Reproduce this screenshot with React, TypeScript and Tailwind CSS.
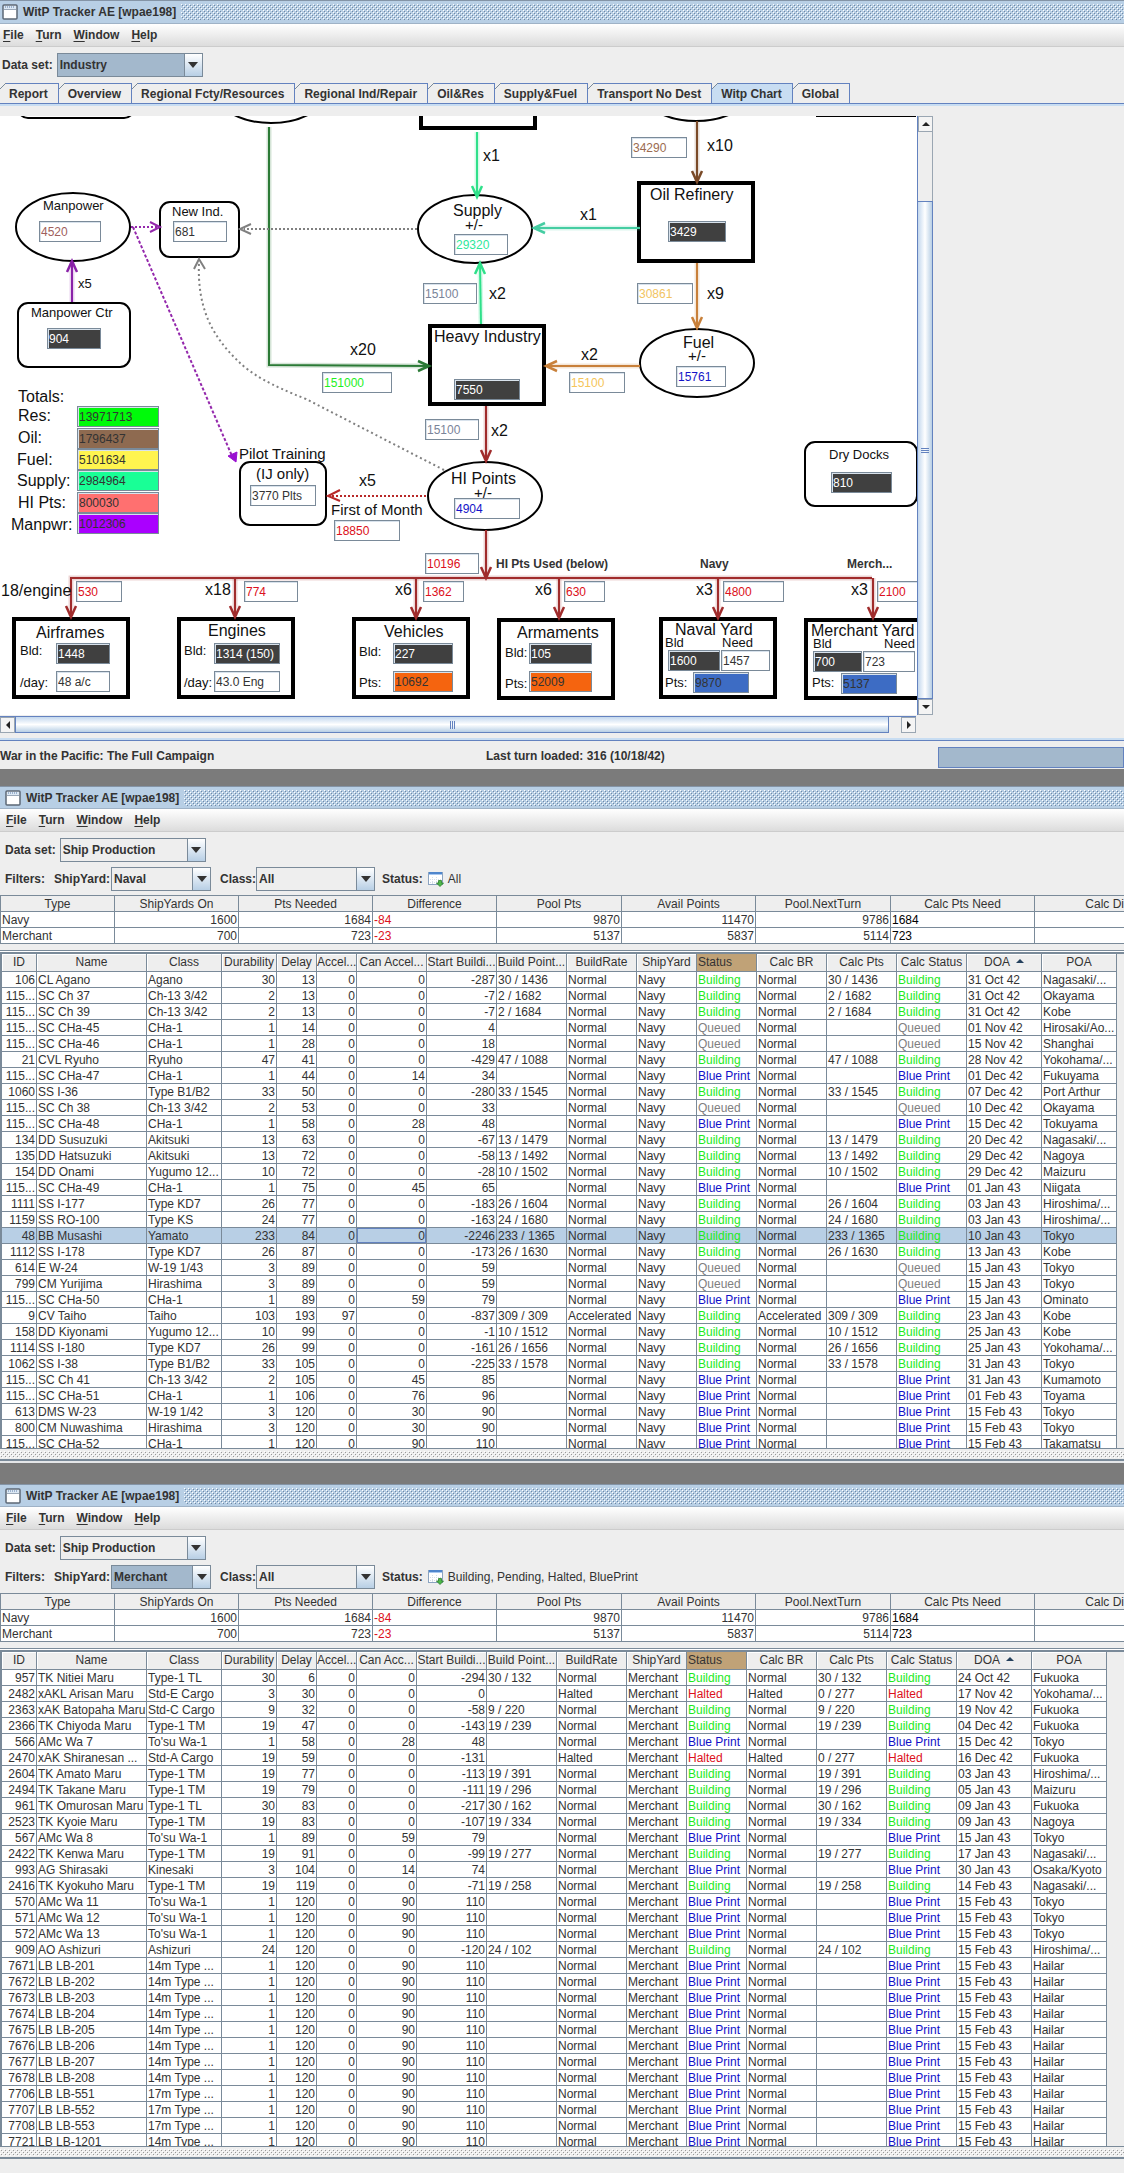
import { useId, useState, type ReactNode } from 'react'

type Status = 'Building' | 'Queued' | 'Blue Print' | 'Halted'

// id, name, class, durability, delay, accel, can accel, start, build pts, rate, status, calc pts, doa, poa
type Ship = [string, string, string, number, number, number, number, number, string, string, Status, string, string, string]

const STATUS_COLOR: Record<Status, string> = {
  Building: 'text-[#1cea1c]',
  Queued: 'text-[#808080]',
  'Blue Print': 'text-[#1010c8]',
  Halted: 'text-[#dc1020]',
}

const NAVAL: Ship[] = [
  ['106', 'CL Agano', 'Agano', 30, 13, 0, 0, -287, '30 / 1436', 'Normal', 'Building', '30 / 1436', '31 Oct 42', 'Nagasaki/...'],
  ['115...', 'SC Ch 37', 'Ch-13 3/42', 2, 13, 0, 0, -7, '2 / 1682', 'Normal', 'Building', '2 / 1682', '31 Oct 42', 'Okayama'],
  ['115...', 'SC Ch 39', 'Ch-13 3/42', 2, 13, 0, 0, -7, '2 / 1684', 'Normal', 'Building', '2 / 1684', '31 Oct 42', 'Kobe'],
  ['115...', 'SC CHa-45', 'CHa-1', 1, 14, 0, 0, 4, '', 'Normal', 'Queued', '', '01 Nov 42', 'Hirosaki/Ao...'],
  ['115...', 'SC CHa-46', 'CHa-1', 1, 28, 0, 0, 18, '', 'Normal', 'Queued', '', '15 Nov 42', 'Shanghai'],
  ['21', 'CVL Ryuho', 'Ryuho', 47, 41, 0, 0, -429, '47 / 1088', 'Normal', 'Building', '47 / 1088', '28 Nov 42', 'Yokohama/...'],
  ['115...', 'SC CHa-47', 'CHa-1', 1, 44, 0, 14, 34, '', 'Normal', 'Blue Print', '', '01 Dec 42', 'Fukuyama'],
  ['1060', 'SS I-36', 'Type B1/B2', 33, 50, 0, 0, -280, '33 / 1545', 'Normal', 'Building', '33 / 1545', '07 Dec 42', 'Port Arthur'],
  ['115...', 'SC Ch 38', 'Ch-13 3/42', 2, 53, 0, 0, 33, '', 'Normal', 'Queued', '', '10 Dec 42', 'Okayama'],
  ['115...', 'SC CHa-48', 'CHa-1', 1, 58, 0, 28, 48, '', 'Normal', 'Blue Print', '', '15 Dec 42', 'Tokuyama'],
  ['134', 'DD Susuzuki', 'Akitsuki', 13, 63, 0, 0, -67, '13 / 1479', 'Normal', 'Building', '13 / 1479', '20 Dec 42', 'Nagasaki/...'],
  ['135', 'DD Hatsuzuki', 'Akitsuki', 13, 72, 0, 0, -58, '13 / 1492', 'Normal', 'Building', '13 / 1492', '29 Dec 42', 'Nagoya'],
  ['154', 'DD Onami', 'Yugumo 12...', 10, 72, 0, 0, -28, '10 / 1502', 'Normal', 'Building', '10 / 1502', '29 Dec 42', 'Maizuru'],
  ['115...', 'SC CHa-49', 'CHa-1', 1, 75, 0, 45, 65, '', 'Normal', 'Blue Print', '', '01 Jan 43', 'Niigata'],
  ['1111', 'SS I-177', 'Type KD7', 26, 77, 0, 0, -183, '26 / 1604', 'Normal', 'Building', '26 / 1604', '03 Jan 43', 'Hiroshima/...'],
  ['1159', 'SS RO-100', 'Type KS', 24, 77, 0, 0, -163, '24 / 1680', 'Normal', 'Building', '24 / 1680', '03 Jan 43', 'Hiroshima/...'],
  ['48', 'BB Musashi', 'Yamato', 233, 84, 0, 0, -2246, '233 / 1365', 'Normal', 'Building', '233 / 1365', '10 Jan 43', 'Tokyo'],
  ['1112', 'SS I-178', 'Type KD7', 26, 87, 0, 0, -173, '26 / 1630', 'Normal', 'Building', '26 / 1630', '13 Jan 43', 'Kobe'],
  ['614', 'E W-24', 'W-19 1/43', 3, 89, 0, 0, 59, '', 'Normal', 'Queued', '', '15 Jan 43', 'Tokyo'],
  ['799', 'CM Yurijima', 'Hirashima', 3, 89, 0, 0, 59, '', 'Normal', 'Queued', '', '15 Jan 43', 'Tokyo'],
  ['115...', 'SC CHa-50', 'CHa-1', 1, 89, 0, 59, 79, '', 'Normal', 'Blue Print', '', '15 Jan 43', 'Ominato'],
  ['9', 'CV Taiho', 'Taiho', 103, 193, 97, 0, -837, '309 / 309', 'Accelerated', 'Building', '309 / 309', '23 Jan 43', 'Kobe'],
  ['158', 'DD Kiyonami', 'Yugumo 12...', 10, 99, 0, 0, -1, '10 / 1512', 'Normal', 'Building', '10 / 1512', '25 Jan 43', 'Kobe'],
  ['1114', 'SS I-180', 'Type KD7', 26, 99, 0, 0, -161, '26 / 1656', 'Normal', 'Building', '26 / 1656', '25 Jan 43', 'Yokohama/...'],
  ['1062', 'SS I-38', 'Type B1/B2', 33, 105, 0, 0, -225, '33 / 1578', 'Normal', 'Building', '33 / 1578', '31 Jan 43', 'Tokyo'],
  ['115...', 'SC Ch 41', 'Ch-13 3/42', 2, 105, 0, 45, 85, '', 'Normal', 'Blue Print', '', '31 Jan 43', 'Kumamoto'],
  ['115...', 'SC CHa-51', 'CHa-1', 1, 106, 0, 76, 96, '', 'Normal', 'Blue Print', '', '01 Feb 43', 'Toyama'],
  ['613', 'DMS W-23', 'W-19 1/42', 3, 120, 0, 30, 90, '', 'Normal', 'Blue Print', '', '15 Feb 43', 'Tokyo'],
  ['800', 'CM Nuwashima', 'Hirashima', 3, 120, 0, 30, 90, '', 'Normal', 'Blue Print', '', '15 Feb 43', 'Tokyo'],
  ['115...', 'SC CHa-52', 'CHa-1', 1, 120, 0, 90, 110, '', 'Normal', 'Blue Print', '', '15 Feb 43', 'Takamatsu'],
]

const barge = (id: string, num: string, cls = '14m Type ...'): Ship => [
  id, `LB LB-${num}`, cls, 1, 120, 0, 90, 110, '', 'Normal', 'Blue Print', '', '15 Feb 43', 'Hailar',
]

const MERCHANT: Ship[] = [
  ['957', 'TK Nitiei Maru', 'Type-1 TL', 30, 6, 0, 0, -294, '30 / 132', 'Normal', 'Building', '30 / 132', '24 Oct 42', 'Fukuoka'],
  ['2482', 'xAKL Arisan Maru', 'Std-E Cargo', 3, 30, 0, 0, 0, '', 'Halted', 'Halted', '0 / 277', '17 Nov 42', 'Yokohama/...'],
  ['2363', 'xAK Batopaha Maru', 'Std-C Cargo', 9, 32, 0, 0, -58, '9 / 220', 'Normal', 'Building', '9 / 220', '19 Nov 42', 'Fukuoka'],
  ['2366', 'TK Chiyoda Maru', 'Type-1 TM', 19, 47, 0, 0, -143, '19 / 239', 'Normal', 'Building', '19 / 239', '04 Dec 42', 'Fukuoka'],
  ['566', 'AMc Wa 7', "To'su Wa-1", 1, 58, 0, 28, 48, '', 'Normal', 'Blue Print', '', '15 Dec 42', 'Tokyo'],
  ['2470', 'xAK Shiranesan ...', 'Std-A Cargo', 19, 59, 0, 0, -131, '', 'Halted', 'Halted', '0 / 277', '16 Dec 42', 'Fukuoka'],
  ['2604', 'TK Amato Maru', 'Type-1 TM', 19, 77, 0, 0, -113, '19 / 391', 'Normal', 'Building', '19 / 391', '03 Jan 43', 'Hiroshima/...'],
  ['2494', 'TK Takane Maru', 'Type-1 TM', 19, 79, 0, 0, -111, '19 / 296', 'Normal', 'Building', '19 / 296', '05 Jan 43', 'Maizuru'],
  ['961', 'TK Omurosan Maru', 'Type-1 TL', 30, 83, 0, 0, -217, '30 / 162', 'Normal', 'Building', '30 / 162', '09 Jan 43', 'Fukuoka'],
  ['2523', 'TK Kyoie Maru', 'Type-1 TM', 19, 83, 0, 0, -107, '19 / 334', 'Normal', 'Building', '19 / 334', '09 Jan 43', 'Nagoya'],
  ['567', 'AMc Wa 8', "To'su Wa-1", 1, 89, 0, 59, 79, '', 'Normal', 'Blue Print', '', '15 Jan 43', 'Tokyo'],
  ['2422', 'TK Kenwa Maru', 'Type-1 TM', 19, 91, 0, 0, -99, '19 / 277', 'Normal', 'Building', '19 / 277', '17 Jan 43', 'Nagasaki/...'],
  ['993', 'AG Shirasaki', 'Kinesaki', 3, 104, 0, 14, 74, '', 'Normal', 'Blue Print', '', '30 Jan 43', 'Osaka/Kyoto'],
  ['2416', 'TK Kyokuho Maru', 'Type-1 TM', 19, 119, 0, 0, -71, '19 / 258', 'Normal', 'Building', '19 / 258', '14 Feb 43', 'Nagasaki/...'],
  ['570', 'AMc Wa 11', "To'su Wa-1", 1, 120, 0, 90, 110, '', 'Normal', 'Blue Print', '', '15 Feb 43', 'Tokyo'],
  ['571', 'AMc Wa 12', "To'su Wa-1", 1, 120, 0, 90, 110, '', 'Normal', 'Blue Print', '', '15 Feb 43', 'Tokyo'],
  ['572', 'AMc Wa 13', "To'su Wa-1", 1, 120, 0, 90, 110, '', 'Normal', 'Blue Print', '', '15 Feb 43', 'Tokyo'],
  ['909', 'AO Ashizuri', 'Ashizuri', 24, 120, 0, 0, -120, '24 / 102', 'Normal', 'Building', '24 / 102', '15 Feb 43', 'Hiroshima/...'],
  barge('7671', '201'),
  barge('7672', '202'),
  barge('7673', '203'),
  barge('7674', '204'),
  barge('7675', '205'),
  barge('7676', '206'),
  barge('7677', '207'),
  barge('7678', '208'),
  barge('7706', '551', '17m Type ...'),
  barge('7707', '552', '17m Type ...'),
  barge('7708', '553', '17m Type ...'),
  barge('7721', '1201'),
]

/* ---------- window chrome ---------- */

function Bumps({ className, light = '#ffffff', dark = '#7088a4' }: { className: string; light?: string; dark?: string }) {
  const id = useId()
  return (
    <svg className={className} aria-hidden="true">
      <defs>
        <pattern id={id} width="4" height="4" patternUnits="userSpaceOnUse">
          <rect x="0" y="0" width="1" height="1" fill={light} />
          <rect x="1" y="1" width="1" height="1" fill={dark} />
          <rect x="2" y="2" width="1" height="1" fill={light} />
          <rect x="3" y="3" width="1" height="1" fill={dark} />
        </pattern>
      </defs>
      <rect width="100%" height="100%" fill={`url(#${id})`} />
    </svg>
  )
}

function FrameIcon() {
  return (
    <svg width="16" height="16" viewBox="0 0 16 16" aria-hidden="true">
      <rect x="1" y="1" width="14" height="14" rx="1" fill="#fff" stroke="#5c6876" strokeWidth="1.5" />
      <rect x="2" y="2" width="12" height="3" fill="#dce8f4" />
      <path d="M3 3h10" stroke="#5c7ca8" strokeDasharray="1 1" />
      <path d="M2 5.500h12" stroke="#9aa8b8" />
    </svg>
  )
}

function Frame({ inset, children }: { inset: boolean; children: ReactNode }) {
  return (
    <section className="bg-[#eeeeee]">
      <header
        className={`flex items-center gap-[5px] border-t border-b border-t-[#8494a6] border-b-[#9fb2c6] bg-[#b8cfe5] ${
          inset ? 'h-[23px] pl-[5px]' : 'h-6 pl-[2px]'
        }`}
      >
        <FrameIcon />
        <h2 className="font-bold whitespace-nowrap">WitP Tracker AE [wpae198]</h2>
        <Bumps className="h-4 min-w-0 flex-1" />
      </header>
      <nav
        className={`flex h-[23px] items-center gap-3 border-b border-[#cccccc] bg-linear-to-b from-white to-[#dcdcdc] ${
          inset ? 'pl-[6px]' : 'pl-[3px]'
        }`}
      >
        {['File', 'Turn', 'Window', 'Help'].map((m) => (
          <button key={m} type="button" className="font-bold">
            <span className="underline underline-offset-2">{m[0]}</span>
            {m.slice(1)}
          </button>
        ))}
      </nav>
      {children}
    </section>
  )
}

function Combo({ id, options, focused, width }: { id: string; options: string[]; focused?: boolean; width: string }) {
  const [value, setValue] = useState(options[0])
  return (
    <span className={`relative flex h-6 ${width}`}>
      <select
        id={id}
        value={value}
        onChange={(e) => setValue(e.target.value)}
        className={`w-full appearance-none border border-[#7a8a99] pl-[2px] font-bold outline-none ${
          focused ? 'bg-[#a3b8cc]' : 'bg-[#eeeeee]'
        }`}
      >
        {options.map((o) => (
          <option key={o}>{o}</option>
        ))}
      </select>
      <span className="pointer-events-none absolute inset-y-0 right-0 flex w-[19px] items-center justify-center border border-[#7a8a99] bg-linear-to-b from-white to-[#b8cfe5]">
        <svg width="10" height="6" viewBox="0 0 10 6" aria-hidden="true">
          <path d="M0 0h10L5 6z" fill="#333" />
        </svg>
      </span>
    </span>
  )
}

/* ---------- industry chart ---------- */

const TABS = ['Report', 'Overview', 'Regional Fcty/Resources', 'Regional Ind/Repair', 'Oil&Res', 'Supply&Fuel', 'Transport No Dest', 'Witp Chart', 'Global']

// the sheet is shown scrolled down by this much
const SCROLL_TOP = 116

// name, value, x, y, width, text and fill
const FIELDS: [string, string, number, number, number, string][] = [
  ['Oil output', '34290', 631, 137, 56, 'text-[#9b6b50]'],
  ['Manpower', '4520', 39, 221, 62, 'text-[#a0605c]'],
  ['New industry', '681', 173, 221, 54, 'text-[#333333]'],
  ['Supply change', '29320', 454, 234, 54, 'text-[#2ee89a]'],
  ['Oil refinery', '3429', 668, 221, 58, 'bg-[#404040] text-white'],
  ['Heavy industry supply', '15100', 423, 283, 54, 'text-[#7a8499]'],
  ['Refinery fuel', '30861', 637, 283, 56, 'text-[#f2c462]'],
  ['Manpower centers', '904', 47, 328, 54, 'bg-[#404040] text-white'],
  ['Resources used', '151000', 322, 372, 70, 'text-[#1ef01e]'],
  ['Heavy industry', '7550', 454, 379, 66, 'bg-[#404040] text-white'],
  ['Fuel used', '15100', 569, 372, 56, 'text-[#f5c55a]'],
  ['Fuel change', '15761', 676, 366, 50, 'text-[#1414c8]'],
  ['Heavy industry points', '15100', 425, 419, 54, 'text-[#7a8499]'],
  ['Pilots', '3770 Plts', 250, 485, 66, 'text-[#333333]'],
  ['HI points change', '4904', 454, 498, 66, 'text-[#1414c8]'],
  ['Pilot cost', '18850', 334, 520, 66, 'text-[#dc1020]'],
  ['HI points used', '10196', 425, 553, 54, 'text-[#dc1020]'],
  ['Dry docks', '810', 831, 472, 61, 'bg-[#404040] text-white'],
  ['Total resources', '13971713', 77, 406, 82, 'bg-[#00fa0a] text-[#333333]'],
  ['Total oil', '1796437', 77, 428, 82, 'bg-[#8e6a50] text-[#333333]'],
  ['Total fuel', '5101634', 77, 449, 82, 'bg-[#fff44f] text-[#333333]'],
  ['Total supply', '2984964', 77, 470, 82, 'bg-[#19ff96] text-[#333333]'],
  ['Total HI points', '800030', 77, 492, 82, 'bg-[#ff7070] text-[#333333]'],
  ['Total manpower', '1012306', 77, 513, 82, 'bg-[#aa00ff] text-[#333333]'],
  ['Airframe HI', '530', 76, 581, 46, 'text-[#dc1020]'],
  ['Engine HI', '774', 244, 581, 54, 'text-[#dc1020]'],
  ['Vehicle HI', '1362', 423, 581, 41, 'text-[#dc1020]'],
  ['Armament HI', '630', 564, 581, 41, 'text-[#dc1020]'],
  ['Naval yard HI', '4800', 723, 581, 61, 'text-[#dc1020]'],
  ['Merchant yard HI', '2100', 877, 581, 54, 'text-[#dc1020]'],
  ['Airframes built', '1448', 56, 643, 54, 'bg-[#404040] text-white'],
  ['Airframes per day', '48 a/c', 56, 671, 54, 'text-[#333333]'],
  ['Engines built', '1314 (150)', 214, 643, 66, 'bg-[#404040] text-white'],
  ['Engines per day', '43.0 Eng', 214, 671, 66, 'text-[#333333]'],
  ['Vehicles built', '227', 393, 643, 60, 'bg-[#404040] text-white'],
  ['Vehicle points', '10692', 393, 671, 60, 'bg-[#f5640f] text-[#333333]'],
  ['Armaments built', '105', 529, 643, 63, 'bg-[#404040] text-white'],
  ['Armament points', '52009', 529, 671, 63, 'bg-[#f5640f] text-[#333333]'],
  ['Naval yard built', '1600', 668, 650, 52, 'bg-[#404040] text-white'],
  ['Naval yard need', '1457', 721, 650, 49, 'text-[#333333]'],
  ['Naval yard points', '9870', 693, 672, 56, 'bg-[#3d6cc4] text-[#333333]'],
  ['Merchant yard built', '700', 813, 651, 49, 'bg-[#404040] text-white'],
  ['Merchant yard need', '723', 863, 651, 52, 'text-[#333333]'],
  ['Merchant yard points', '5137', 841, 673, 56, 'bg-[#3d6cc4] text-[#333333]'],
]

// text, x, baseline, size
const LABELS: [string, number, number, number][] = [
  ['x1', 483, 161, 16],
  ['x10', 707, 151, 16],
  ['Manpower', 43, 210, 13],
  ['New Ind.', 172, 216, 13],
  ['Supply', 453, 216, 16],
  ['+/-', 465, 230, 15],
  ['x1', 580, 220, 16],
  ['Oil Refinery', 650, 200, 16],
  ['x2', 489, 299, 16],
  ['x9', 707, 299, 16],
  ['x5', 78, 288, 13],
  ['Manpower Ctr', 31, 317, 13],
  ['Heavy Industry', 434, 342, 16],
  ['Fuel', 683, 348, 16],
  ['+/-', 688, 361, 15],
  ['x20', 350, 355, 16],
  ['x2', 581, 360, 16],
  ['x2', 491, 436, 16],
  ['Totals:', 18, 402, 16],
  ['Res:', 18, 421, 16],
  ['Oil:', 18, 443, 16],
  ['Fuel:', 17, 465, 16],
  ['Supply:', 17, 486, 16],
  ['HI Pts:', 18, 508, 16],
  ['Manpwr:', 11, 530, 16],
  ['Pilot Training', 239, 459, 15],
  ['(IJ only)', 256, 479, 15],
  ['x5', 359, 486, 16],
  ['HI Points', 451, 484, 16],
  ['+/-', 474, 498, 15],
  ['First of Month', 331, 515, 15],
  ['Dry Docks', 829, 459, 13],
  ['18/engine', 1, 596, 16],
  ['x18', 205, 595, 16],
  ['x6', 395, 595, 16],
  ['x6', 535, 595, 16],
  ['x3', 696, 595, 16],
  ['x3', 851, 595, 16],
  ['Airframes', 36, 638, 16],
  ['Bld:', 20, 655, 13],
  ['/day:', 20, 687, 13],
  ['Engines', 208, 636, 16],
  ['Bld:', 184, 655, 13],
  ['/day:', 184, 687, 13],
  ['Vehicles', 384, 637, 16],
  ['Bld:', 359, 656, 13],
  ['Pts:', 359, 687, 13],
  ['Armaments', 517, 638, 16],
  ['Bld:', 505, 657, 13],
  ['Pts:', 505, 688, 13],
  ['Naval Yard', 675, 635, 16],
  ['Bld', 665, 647, 13],
  ['Need', 722, 647, 13],
  ['Pts:', 665, 687, 13],
  ['Merchant Yard', 811, 636, 16],
  ['Bld', 813, 648, 13],
  ['Need', 884, 648, 13],
  ['Pts:', 812, 687, 13],
]

const HEADINGS: [string, number][] = [
  ['HI Pts Used (below)', 496],
  ['Navy', 700],
  ['Merch...', 847],
]

const ELLIPSES: [number, number][] = [[271, 89], [696, 87], [73, 227], [475, 229], [697, 363], [485, 496]]

const ROUNDED: [number, number, number, number][] = [
  [18, 52, 116, 66],
  [160, 202, 79, 55],
  [18, 303, 112, 64],
  [240, 462, 86, 63],
  [805, 442, 112, 64],
]

const BOXES: [number, number, number][] = [
  [421, 50, 114],
  [639, 183, 114],
  [430, 326, 114],
  [14, 619, 114],
  [179, 619, 114],
  [354, 619, 114],
  [499, 620, 114],
  [661, 619, 114],
  [806, 620, 114],
]

const RED = '#a02c2c'

// path, colour, arrow tip x, y, rotation
const WIRES: [string, string, number, number, number][] = [
  ['M477 132V196', '#2fe08a', 477, 197, 0],
  ['M481 324L480 264', '#2fe08a', 480, 263, 180],
  ['M640 228H536', '#45cda2', 534, 228, 90],
  ['M269 127V365L428 366', '#2b7a36', 429, 366, -90],
  ['M72 302V262', '#8a22a8', 72, 261, 180],
  ['M697 121V181', '#7a4a28', 697, 182, 0],
  ['M697 263V328', '#c8803a', 697, 328, 0],
  ['M640 366H548', '#c8803a', 546, 366, 90],
  ['M486 406V460', RED, 486, 461, 0],
  ['M486 530V577', RED, 486, 578, 0],
  ['M872 578H71V616', RED, 71, 617, 0],
  ['M235 578V616', RED, 235, 617, 0],
  ['M416 578V617', RED, 416, 618, 0],
  ['M559 578V617', RED, 559, 618, 0],
  ['M718 578V617', RED, 718, 618, 0],
  ['M873 578V617', RED, 873, 618, 0],
]

function ChartSheet() {
  return (
    <svg className="absolute inset-0 h-full w-full" aria-label="Industry flow" role="img">
      <g transform={`translate(0 ${-SCROLL_TOP})`} fontFamily="'Liberation Sans', Arial, sans-serif">
        <g fill="#fff" stroke="#000" strokeWidth="2">
          {ELLIPSES.map(([cx, cy]) => (
            <ellipse key={cx} cx={cx} cy={cy} rx="57" ry="34" />
          ))}
          {ROUNDED.map(([x, y, w, h]) => (
            <rect key={`${x}-${y}`} x={x} y={y} width={w} height={h} rx="10" />
          ))}
        </g>
        <g fill="#fff" stroke="#000" strokeWidth="4">
          {BOXES.map(([x, y, w]) => (
            <rect key={x} x={x} y={y} width={w} height="78" />
          ))}
        </g>
        <path d="M816 116.500H916" stroke="#000" />
        <g fill="none">
          {WIRES.map(([d, color, x, y, rot]) => (
            <g key={d} stroke={color}>
              <path d={d} strokeWidth="5" opacity="0.200" />
              <path d={d} strokeWidth="2" />
              <path d="M-5 -11L0 0L5 -11" transform={`translate(${x} ${y}) rotate(${rot})`} strokeWidth="2.500" />
            </g>
          ))}
          <g stroke="#808080" strokeWidth="2">
            <path d="M417 229H244" strokeDasharray="2 2" />
            <path d="M251 224L240 229L251 234" />
            <path d="M444 470L306 399C270 385 251 374 238 361C212 336 197 308 199 262" strokeDasharray="2 3" />
            <path d="M194 269L199 259L205 269" />
          </g>
          <g stroke="#9428ac" strokeWidth="2">
            <path d="M131 227H157" strokeDasharray="2 2" />
            <path d="M150 222L160 227L150 232" />
            <path d="M133 227L232 456" strokeDasharray="3 2" />
          </g>
          <path d="M236 462L228 456L237 452Z" fill="#9a10d0" stroke="#9a10d0" />
          <g stroke="#b82828" strokeWidth="2">
            <path d="M426 496H332" strokeDasharray="2 2" />
            <path d="M340 490L328 496L340 501" />
          </g>
        </g>
        <g fill="#111">
          {LABELS.map(([text, x, y, size]) => (
            <text key={`${x}-${y}`} x={x} y={y} fontSize={size}>
              {text}
            </text>
          ))}
        </g>
        <g fill="#333" fontSize="12" fontWeight="bold">
          {HEADINGS.map(([text, x]) => (
            <text key={text} x={x} y="568">
              {text}
            </text>
          ))}
        </g>
      </g>
    </svg>
  )
}

function ScrollArrow({ label, d, className }: { label: string; d: string; className: string }) {
  return (
    <button type="button" aria-label={label} className={`flex items-center justify-center border border-[#9aa6b2] bg-[#f4f4f4] ${className}`}>
      <svg width="8" height="8" viewBox="0 0 8 8" aria-hidden="true">
        <path d={d} fill="#222" />
      </svg>
    </button>
  )
}

function IndustryChart() {
  return (
    <div className="w-[933px] max-w-full pb-[5px]">
      <div className="flex h-[599px]">
        <div className="relative min-w-0 flex-1 overflow-hidden bg-white">
          <ChartSheet />
          {FIELDS.map(([name, value, x, y, w, tone]) => (
            <input
              key={name}
              readOnly
              aria-label={name}
              value={value}
              className={`absolute h-[21px] border border-[#7a8a99] pl-px shadow-[inset_1px_1px_0_#d8e2ec] outline-none ${tone}`}
              style={{ left: x, top: y - SCROLL_TOP, width: w }}
            />
          ))}
        </div>
        <div className="flex w-4 flex-col border-l border-[#6382bf]">
          <ScrollArrow label="Scroll up" d="M0 6h8L4 2z" className="h-4" />
          <div className="h-[69px] border-r border-[#9aa6b2]" />
          <div className="flex flex-1 flex-col items-center justify-center gap-px border border-l-0 border-[#6382bf] bg-linear-to-r from-[#c4d8ee] via-white to-[#b8cfe5]">
            <span className="h-px w-2 bg-[#6382bf]" />
            <span className="h-px w-2 bg-[#6382bf]" />
            <span className="h-px w-2 bg-[#6382bf]" />
          </div>
          <ScrollArrow label="Scroll down" d="M0 2h8L4 6z" className="h-4" />
        </div>
      </div>
      <div className="mt-px mr-[17px] flex h-[17px] border-t border-[#6382bf] bg-[#eeeeee]">
        <ScrollArrow label="Scroll left" d="M6 0v8L2 4z" className="w-[15px]" />
        <div className="flex flex-1 items-center justify-center gap-px border border-t-0 border-[#6382bf] bg-linear-to-b from-[#c4d8ee] via-white to-[#b8cfe5]">
          <span className="h-2 w-px bg-[#6382bf]" />
          <span className="h-2 w-px bg-[#6382bf]" />
          <span className="h-2 w-px bg-[#6382bf]" />
        </div>
        <div className="w-3" />
        <ScrollArrow label="Scroll right" d="M2 0v8l4-4z" className="w-[15px]" />
      </div>
    </div>
  )
}

function IndustryFrame() {
  const [tab, setTab] = useState('Witp Chart')
  return (
    <Frame inset={false}>
      <div className="flex items-center gap-1 pt-[6px] pl-[2px]">
        <label htmlFor="dataset-industry" className="font-bold">
          Data set:
        </label>
        <Combo id="dataset-industry" options={['Industry', 'Ship Production']} focused width="w-[146px]" />
      </div>
      <div role="tablist" className="mt-[6px] flex h-5 items-end">
        {TABS.map((t) => (
          <button
            key={t}
            type="button"
            role="tab"
            aria-selected={tab === t}
            onClick={() => setTab(t)}
            className={`relative h-5 border-t border-r border-[#6382bf] pr-[10px] pl-[9px] font-bold whitespace-nowrap ${
              tab === t ? 'bg-[#c8ddf2]' : 'bg-[#eeeeee]'
            }`}
          >
            <svg className="absolute -top-px left-0" width="6" height="6" viewBox="0 0 6 6" aria-hidden="true">
              <path d="M0 0H6L0 6Z" fill="#eeeeee" />
              <path d="M0 6L6 0" stroke="#7a8a99" />
            </svg>
            {t}
          </button>
        ))}
      </div>
      <div className="mb-[10px] h-[3px] border-t border-[#6382bf] bg-[#c8ddf2]" />
      <IndustryChart />
      <div className="h-[3px] border-b border-[#6382bf] bg-[#c8ddf2]" />
      <footer className="grid h-7 grid-cols-[486fr_452fr_186fr] items-center pt-px font-bold">
        <span>War in the Pacific: The Full Campaign</span>
        <span>Last turn loaded: 316 (10/18/42)</span>
        <span role="progressbar" aria-label="Load progress" className="mt-1 h-[21px] border border-[#6382bf] bg-[#a3b8cc]" />
      </footer>
    </Frame>
  )
}

/* ---------- ship production ---------- */

const SUMMARY_COLS = ['w-[114px]', 'w-[124px]', 'w-[134px]', 'w-[124px]', 'w-[125px]', 'w-[134px]', 'w-[135px]', 'w-[144px]', 'w-auto']
const SUMMARY_HEAD = ['Type', 'ShipYards On', 'Pts Needed', 'Difference', 'Pool Pts', 'Avail Points', 'Pool.NextTurn', 'Calc Pts Need', 'Calc Di']
const SUMMARY_ROWS = [
  ['Navy', '1600', '1684', '-84', '9870', '11470', '9786', '1684', ''],
  ['Merchant', '700', '723', '-23', '5137', '5837', '5114', '723', ''],
]
const SUMMARY_TONE = ['', 'text-right', 'text-right', 'text-[#dc1020]', 'text-right', 'text-right', 'text-right', 'text-black', '']

function SummaryTable() {
  return (
    <table className="w-full table-fixed border-separate border-spacing-0 border-t border-l border-[#7a8a99]">
      <colgroup>
        {SUMMARY_COLS.map((w, i) => (
          <col key={i} className={w} />
        ))}
      </colgroup>
      <thead>
        <tr>
          {SUMMARY_HEAD.map((h, i) => (
            <th
              key={h}
              className={`h-4 overflow-hidden border-r border-b border-[#7a8a99] px-0 pt-px pb-0 leading-[14px] font-normal whitespace-nowrap last:border-r-0 ${
                i === 8 ? 'text-right' : 'text-center'
              }`}
            >
              {h}
            </th>
          ))}
        </tr>
      </thead>
      <tbody className="bg-white">
        {SUMMARY_ROWS.map((r) => (
          <tr key={r[0]}>
            {r.map((v, i) => (
              <td key={i} className={`h-4 border-r border-b border-[#7a8a99] px-px pt-px pb-0 leading-[14px] last:border-r-0 ${SUMMARY_TONE[i]}`}>
                {v}
              </td>
            ))}
          </tr>
        ))}
      </tbody>
    </table>
  )
}

const SHIP_COLS = ['w-[35px]', 'w-[110px]', 'w-[75px]', 'w-[55px]', 'w-[40px]', 'w-[40px]', 'w-[70px]', 'w-[70px]', 'w-[70px]', 'w-[70px]', 'w-[60px]', 'w-[60px]', 'w-[70px]', 'w-[70px]', 'w-[70px]', 'w-[75px]', 'w-[75px]']

function ShipTable({ ships, yard, selected }: { ships: Ship[]; yard: 'Navy' | 'Merchant'; selected?: string }) {
  const navy = yard === 'Navy'
  const head = ['ID', 'Name', 'Class', 'Durability', 'Delay', 'Accel...', navy ? 'Can Accel...' : 'Can Acc...', 'Start Buildi...', 'Build Point...', 'BuildRate', 'ShipYard', 'Status', 'Calc BR', 'Calc Pts', 'Calc Status', 'DOA', 'POA']
  return (
    <div className="h-[495px] overflow-hidden border-b border-l-2 border-[#7a8a99]">
      <table className={`table-fixed border-separate border-spacing-0 ${navy ? 'w-[1115px]' : 'w-[1105px]'}`}>
        <colgroup>
          {SHIP_COLS.map((w, i) => (
            <col key={i} className={i === 6 && !navy ? 'w-[60px]' : w} />
          ))}
        </colgroup>
        <thead>
          <tr>
            {head.map((h) => (
              <th
                key={h}
                className={`h-[18px] overflow-hidden border-r border-b border-[#7a8a99] p-0 leading-[17px] font-normal whitespace-nowrap ${
                  h === 'Status' ? 'bg-[#c0a277] pl-px text-left' : 'text-center shadow-[inset_1px_1px_0_#ffffff]'
                }`}
              >
                {h}
                {h === 'DOA' && (
                  <svg className="mb-[3px] ml-[6px] inline-block" width="8" height="4" viewBox="0 0 8 4" aria-label="ascending">
                    <path d="M0 4h8L4 0z" fill="#24405c" />
                  </svg>
                )}
              </th>
            ))}
          </tr>
        </thead>
        <tbody>
          {ships.map((s, n) => {
            const [id, name, cls, dur, delay, accel, can, start, build, rate, status, calc, doa, poa] = s
            const cells = [id, name, cls, dur, delay, accel, can, start, build, rate, yard, status, rate, calc, status, doa, poa]
            const active = id === selected
            return (
              <tr key={n} className={active ? 'bg-[#b8cfe5]' : 'bg-white'}>
                {cells.map((v, i) => (
                  <td
                    key={i}
                    className={`h-4 overflow-hidden border-r border-b border-[#7a8a99] px-px pt-px pb-0 leading-[14px] whitespace-nowrap ${
                      i === 0 || (i > 2 && i < 8) ? 'text-right' : ''
                    } ${i === 11 || i === 14 ? STATUS_COLOR[status] : ''} ${active && i === 6 ? 'shadow-[inset_0_0_0_1px_#6382bf]' : ''}`}
                  >
                    {v}
                  </td>
                ))}
              </tr>
            )
          })}
        </tbody>
      </table>
    </div>
  )
}

function StatusIcon() {
  return (
    <svg width="16" height="16" viewBox="0 0 16 16" aria-hidden="true">
      <rect x="0.500" y="1.500" width="14" height="12" fill="#fff" stroke="#8ba3c0" />
      <rect x="1" y="1" width="13" height="3" fill="#4f86cc" />
      <path d="M1 3.500h13" stroke="#a8c8f0" />
      <path d="M4.500 6v7M8.500 6v7M2 8.500h12M2 11.500h12" stroke="#d4dee8" strokeDasharray="1 1" />
      <path d="M10.500 9.500h3V12H15.500l-3.500 3.500L8.500 12h2z" fill="#4db848" stroke="#2c7c2c" strokeWidth="0.800" />
    </svg>
  )
}

interface ProductionProps {
  yard: 'Navy' | 'Merchant'
  filter: string
  statusText: string
  ships: Ship[]
  selected?: string
}

function ProductionFrame({ yard, filter, statusText, ships, selected }: ProductionProps) {
  const key = yard.toLowerCase()
  return (
    <Frame inset>
      <div className="flex flex-col gap-[5px] pt-[6px] pb-1 pl-[5px]">
        <div className="flex items-center gap-1">
          <label htmlFor={`dataset-${key}`} className="font-bold">
            Data set:
          </label>
          <Combo id={`dataset-${key}`} options={['Ship Production', 'Industry']} width="w-[146px]" />
        </div>
        <div className="flex items-center font-bold whitespace-nowrap">
          <span className="w-[49px]">Filters:</span>
          <label htmlFor={`yard-${key}`} className="mr-px">
            ShipYard:
          </label>
          <Combo id={`yard-${key}`} options={[filter, filter === 'Naval' ? 'Merchant' : 'Naval']} focused={filter === 'Merchant'} width="w-[100px]" />
          <label htmlFor={`class-${key}`} className="ml-[9px]">
            Class:
          </label>
          <Combo id={`class-${key}`} options={['All']} width="w-[119px]" />
          <span className="mr-[5px] ml-[7px]">Status:</span>
          <button type="button" className="flex items-center gap-1">
            <StatusIcon />
            <span className="font-normal">{statusText}</span>
          </button>
        </div>
      </div>
      <SummaryTable />
      <div className="mt-[6px] h-[2px] border-t border-b border-t-[#7a8a99] border-b-white" />
      <div className="h-[2px] bg-[#7a8a99]" />
      <ShipTable ships={ships} yard={yard} selected={selected} />
      <div className="flex h-[10px] items-center">
        <Bumps className="h-[7px] w-full" dark="#9a9a9a" />
      </div>
      <div className="h-[2px] bg-[#7a8a99]" />
    </Frame>
  )
}

export default function App() {
  return (
    <main className="min-h-screen overflow-hidden bg-[#7b7b7b] font-['Liberation_Sans',Arial,sans-serif] text-[12px] leading-4 text-[#333333]">
      <IndustryFrame />
      <div className="mt-[17px] border-b-2 border-[#e4e6e8]">
        <ProductionFrame yard="Navy" filter="Naval" statusText="All" ships={NAVAL} selected="48" />
      </div>
      <div className="mt-[21px] bg-[#eeeeee] pb-[14px]">
        <ProductionFrame yard="Merchant" filter="Merchant" statusText="Building, Pending, Halted, BluePrint" ships={MERCHANT} />
      </div>
    </main>
  )
}
